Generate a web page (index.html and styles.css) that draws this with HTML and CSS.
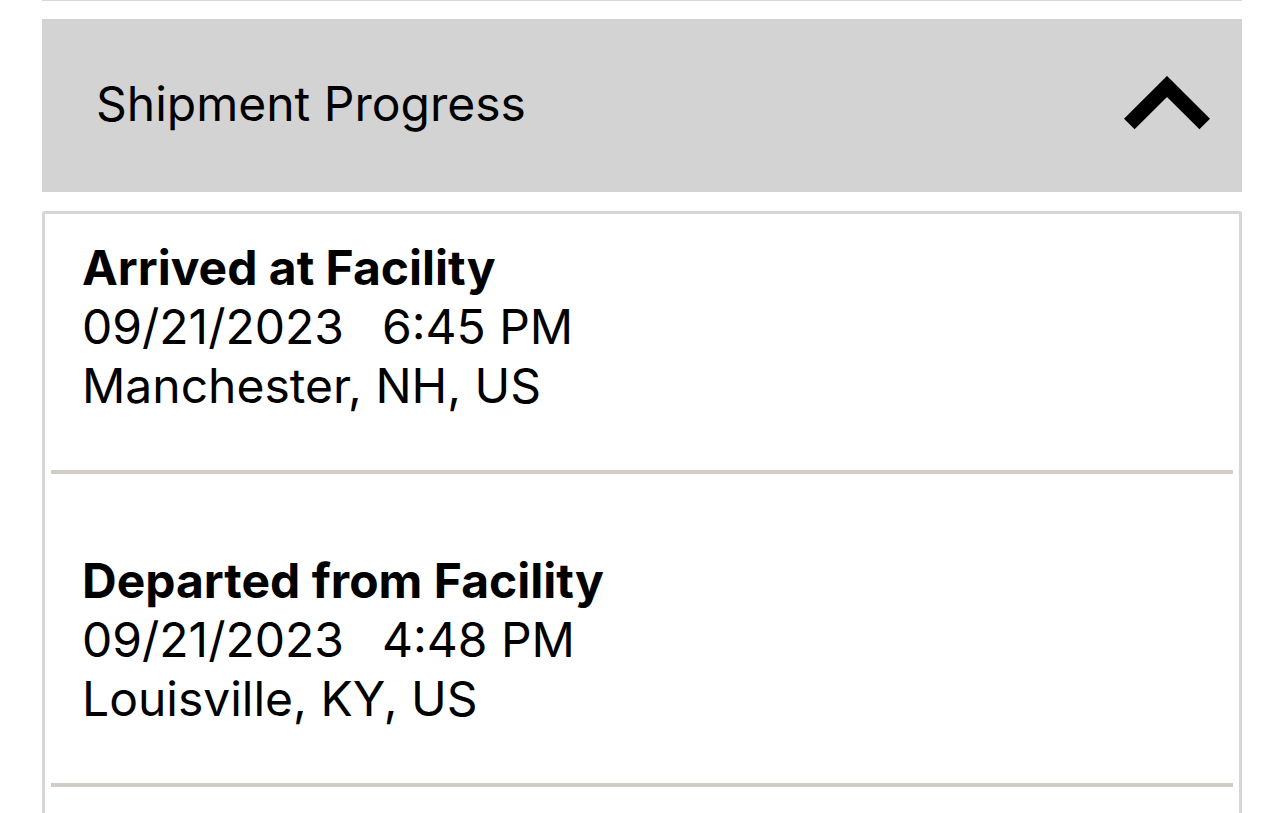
FILE: index.html
```html
<!DOCTYPE html>
<html lang="en">
<head>
<meta charset="utf-8">
<title>Shipment Progress</title>
<link rel="stylesheet" href="styles.css">
</head>
<body>
<div class="page">
  <div class="top-rule"></div>
  <div class="accordion-header">
    <span class="accordion-title">Shipment Progress</span>
    <svg class="chevron" width="86" height="54" viewBox="0 0 86 54" aria-hidden="true">
      <polyline points="5.3,48 43,10.5 80.7,48" fill="none" stroke="#000" stroke-width="15" stroke-linejoin="miter" stroke-linecap="butt"/>
    </svg>
  </div>
  <div class="progress-card">
    <div class="event">
      <div class="event-title">Arrived at Facility</div>
      <div class="event-when"><span>09/21/2023</span><span>6:45 PM</span></div>
      <div class="event-where">Manchester, NH, US</div>
    </div>
    <div class="event">
      <div class="event-title">Departed from Facility</div>
      <div class="event-when"><span>09/21/2023</span><span>4:48 PM</span></div>
      <div class="event-where">Louisville, KY, US</div>
    </div>
  </div>
</div>
</body>
</html>
```
FILE: styles.css
```css
html, body {
  margin: 0;
  padding: 0;
  background: #ffffff;
}
body {
  font-family: Inter, "Liberation Sans", sans-serif;
  color: #000;
  overflow: hidden;
  height: 813px;
}
.page {
  padding: 0 42px;
}
.top-rule {
  height: 1px;
  background: #d6d6d6;
}
.accordion-header {
  margin-top: 18px;
  height: 173px;
  background: #d3d3d3;
  display: flex;
  align-items: center;
  justify-content: space-between;
  padding: 0 32px 0 54px;
  box-sizing: border-box;
}
.accordion-title {
  font-size: 48px;
  line-height: 1;
  margin-top: -3px;
}
.chevron {
  display: block;
  margin-top: -5px;
}
.progress-card {
  margin-top: 19px;
  border: 3px solid #d6d6d6;
  border-bottom: none;
  border-radius: 3px 3px 0 0;
  min-height: 700px;
}
.event {
  padding: 77px 0 55px 31px;
  margin: 0 6px;
  border-bottom: 4px solid #d0ccc6;
  font-size: 48px;
  line-height: 59px;
}
.event:first-child {
  padding-top: 24px;
}
.event-title {
  font-weight: 700;
}
.event-when {
  display: flex;
  gap: 38px;
}
```
